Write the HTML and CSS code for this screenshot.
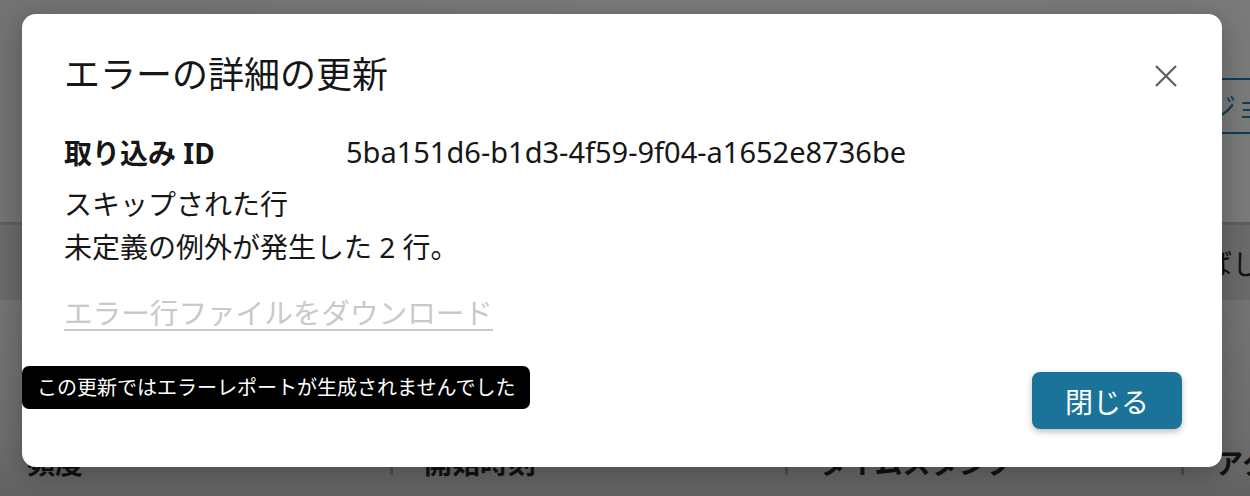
FILE: index.html
```html
<!DOCTYPE html>
<html lang="ja">
<head>
<meta charset="utf-8">
<title>エラーの詳細の更新</title>
<link rel="stylesheet" href="styles.css">
</head>
<body>
<div class="page">
  <div class="page-header">
    <button class="ghost-btn">ジョブを作成</button>
  </div>
  <div class="page-band">
    <span class="band-text">を飛ばし</span>
  </div>
  <div class="page-table">
    <div class="table-head">
      <div class="th th-first">頻度</div>
      <div class="th"><span class="sep"></span>開始時刻</div>
      <div class="th"><span class="sep"></span>タイムスタンプ</div>
      <div class="th"><span class="sep"></span>アクション</div>
    </div>
  </div>
</div>

<div class="modal">
  <div class="modal-head">
    <h1 class="modal-title">エラーの詳細の更新</h1>
    <button class="close-btn" aria-label="閉じる">
      <svg width="22" height="22" viewBox="0 0 22 22"><path d="M1 1 L21 21 M21 1 L1 21" stroke="#5f5f5f" stroke-width="2.2" fill="none"/></svg>
    </button>
  </div>
  <div class="id-row">
    <span class="id-label">取り込み ID</span>
    <span class="id-value">5ba151d6-b1d3-4f59-9f04-a1652e8736be</span>
  </div>
  <div class="info">
    <div class="line">スキップされた行</div>
    <div class="line">未定義の例外が発生した 2 行。</div>
  </div>
  <div class="link-row"><a class="dl-link">エラー行ファイルをダウンロード</a></div>
  <div class="modal-foot">
    <button class="primary-btn">閉じる</button>
  </div>
  <div class="tooltip">この更新ではエラーレポートが生成されませんでした</div>
</div>
</body>
</html>
```

FILE: styles.css
```css
* { box-sizing: border-box; }
html, body {
  margin: 0;
  padding: 0;
}
body {
  width: 1250px;
  height: 496px;
  overflow: hidden;
  position: relative;
  font-family: "Noto Sans", "Noto Sans CJK JP", sans-serif;
  color: #161616;
  background: #6e6e6e;
}

/* dimmed page behind the dialog */
.page {
  width: 1250px;
  height: 496px;
  display: flex;
  flex-direction: column;
}
.page-header {
  height: 225px;
  background: linear-gradient(90deg, #737373 0%, #7b7b7b 50%, #7a7a7a 100%);
  border-bottom: 3px solid #5e5e5e;
  display: flex;
  padding: 78px 0 0 1186px;
}
.ghost-btn {
  height: 56px;
  border: 2px solid #0e3d55;
  border-radius: 8px;
  background: transparent;
  color: #0e3d55;
  font-family: inherit;
  font-size: 28px;
  padding: 0 20px;
  white-space: nowrap;
}
.page-band {
  height: 75px;
  background: #6a6a6a;
  display: flex;
  align-items: center;
  padding-left: 1148px;
  white-space: nowrap;
}
.band-text {
  font-size: 28px;
  color: #111;
}
.page-table {
  flex: 1;
  background: linear-gradient(180deg, #747474 0%, #6e6e6e 70%, #626262 100%);
  padding-top: 145px;
}
.table-head {
  display: grid;
  grid-template-columns: 390px 395px 396px 1fr;
  height: 34px;
}
.th {
  display: flex;
  align-items: center;
  gap: 31px;
  font-size: 28px;
  font-weight: 700;
  color: #111;
  white-space: nowrap;
  overflow: hidden;
}
.th-first { padding-left: 27px; }
.sep {
  width: 3px;
  height: 26px;
  background: #4e4e4e;
  flex: none;
}

/* dialog */
.modal {
  position: absolute;
  left: 22px;
  top: 14px;
  width: 1200px;
  height: 453px;
  background: #fff;
  border-radius: 14px;
  box-shadow: 0 6px 28px rgba(0,0,0,0.28);
  padding: 39px 40px 0 42px;
  display: flex;
  flex-direction: column;
}
.modal-head {
  display: flex;
  justify-content: space-between;
  align-items: center;
  height: 44px;
}
.modal-title {
  margin: 0;
  font-size: 36px;
  font-weight: 400;
  line-height: 44px;
  color: #161616;
}
.close-btn {
  width: 32px;
  height: 32px;
  border: 0;
  background: transparent;
  padding: 5px;
  margin-top: 2px;
  display: flex;
  align-items: center;
  justify-content: center;
}
.id-row {
  display: grid;
  grid-template-columns: 282px 1fr;
  align-items: center;
  height: 43px;
  margin-top: 33px;
}
.id-label {
  font-size: 28px;
  font-weight: 700;
}
.id-value {
  font-size: 29px;
  color: #161616;
}
.info {
  margin-top: 10px;
}
.line {
  font-size: 28px;
  line-height: 43px;
}
.link-row {
  margin-top: 22px;
  line-height: 43px;
}
.dl-link {
  font-size: 28.6px;
  color: #c9c9c9;
  text-decoration: underline;
  text-decoration-color: #c9c9c9;
  text-underline-offset: 5px;
  text-decoration-thickness: 2px;
}
.modal-foot {
  display: flex;
  justify-content: flex-end;
  margin-top: 32px;
}
.primary-btn {
  width: 150px;
  height: 57px;
  border: 0;
  border-radius: 8px;
  background: #1b7399;
  color: #fff;
  font-family: inherit;
  font-size: 28px;
  box-shadow: 0 3px 6px rgba(0,0,0,0.25);
}
.tooltip {
  position: absolute;
  left: 0;
  top: 352px;
  height: 43px;
  background: #000;
  color: #fff;
  border-radius: 7px;
  font-size: 20px;
  line-height: 43px;
  padding: 0 15px;
  white-space: nowrap;
}
```
